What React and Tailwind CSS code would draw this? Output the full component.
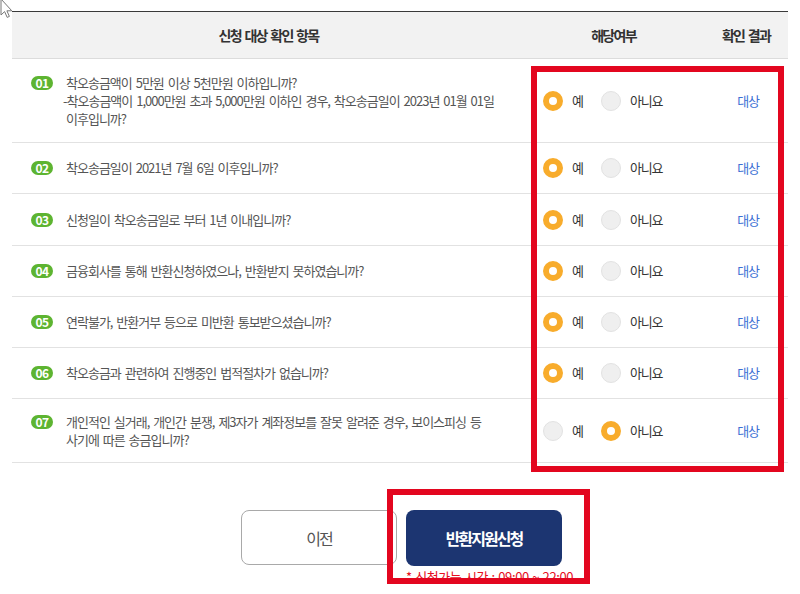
const rows = [
  {
    no: '01',
    lines: [
      '착오송금액이 5만원 이상 5천만원 이하입니까?',
      '-착오송금액이 1,000만원 초과 5,000만원 이하인 경우, 착오송금일이 2023년 01월 01일',
      '이후입니까?',
    ],
    h: 'h-[84px]',
    yes: true,
  },
  { no: '02', lines: ['착오송금일이 2021년 7월 6일 이후입니까?'], h: 'h-[51px]', yes: true },
  { no: '03', lines: ['신청일이 착오송금일로 부터 1년 이내입니까?'], h: 'h-[52px]', yes: true },
  { no: '04', lines: ['금융회사를 통해 반환신청하였으나, 반환받지 못하였습니까?'], h: 'h-[51px]', yes: true },
  { no: '05', lines: ['연락불가, 반환거부 등으로 미반환 통보받으셨습니까?'], h: 'h-[51px]', yes: true, noLabel: '아니오' },
  { no: '06', lines: ['착오송금과 관련하여 진행중인 법적절차가 없습니까?'], h: 'h-[51px]', yes: true },
  {
    no: '07',
    lines: ['개인적인 실거래, 개인간 분쟁, 제3자가 계좌정보를 잘못 알려준 경우, 보이스피싱 등', '사기에 따른 송금입니까?'],
    h: 'h-[64px]',
    yes: false,
  },
];

function Radio({ checked }) {
  return checked ? (
    <span className="w-[20px] h-[20px] rounded-full border-[6px] border-[#f8ac2c] bg-white shrink-0" />
  ) : (
    <span className="w-[20px] h-[20px] rounded-full border border-[#e2e2e2] bg-[#efefef] shrink-0" />
  );
}

export default function App() {
  return (
    <div className="relative w-[800px] h-[594px] bg-white overflow-hidden font-['Noto_Sans_CJK_KR','Noto_Sans',sans-serif]">
      {/* cursor */}
      <svg className="absolute left-0 top-0" width="14" height="20" viewBox="0 0 14 20">
        <path d="M1 -1 L1 15 L4.6 11.6 L7.2 17.4 L9.4 16.4 L6.9 10.8 L11.8 10.8 Z" fill="#fff" stroke="#777" strokeWidth="1" />
      </svg>

      <div className="pt-[11px] px-[12px]">
        <div className="border-t border-[#3a3a3a]">
          {/* header */}
          <div className="grid grid-cols-[519px_169px_92px] h-[47px] items-center bg-[#f2f2f2] border-b border-[#dcdcdc] text-[14px] font-bold text-[#333] tracking-[-1.7px] [word-spacing:2px]">
            <div className="text-center pr-[6px]">신청 대상 확인 항목</div>
            <div className="text-center pr-[4px]">해당여부</div>
            <div className="text-center">확인 결과</div>
          </div>

          {rows.map((r) => (
            <div
              key={r.no}
              className={`grid grid-cols-[519px_169px_92px] items-center border-b border-[#e2e2e2] ${r.h}`}
            >
              <div className="flex items-start pl-[19px]">
                <span className="mt-[2px] w-[22px] h-[14px] rounded-full bg-[#5db431] text-white text-[12px] font-bold leading-[14px] text-center tracking-[-0.6px] shrink-0">
                  {r.no}
                </span>
                <div className="ml-[13px] text-[13px] leading-[18px] text-[#555] tracking-[-1px] [word-spacing:2px]">
                  {r.lines.map((l, i) => (
                    <div key={i} className={l.startsWith('-') ? '-ml-[3px]' : ''}>
                      {l}
                    </div>
                  ))}
                </div>
              </div>
              <div className="flex items-center pl-[12px] text-[13px] text-[#333] tracking-[-1.2px]">
                <div className="flex items-center gap-[9px] w-[58px]">
                  <Radio checked={r.yes} />
                  <span>예</span>
                </div>
                <div className="flex items-center gap-[9px]">
                  <Radio checked={!r.yes} />
                  <span>{r.noLabel || '아니요'}</span>
                </div>
              </div>
              <div className="text-center text-[13px] text-[#3b6fd4] tracking-[-1.3px] pl-[4px]">대상</div>
            </div>
          ))}
        </div>
      </div>

      {/* buttons */}
      <div className="flex justify-center gap-[9px] mt-[47px] pl-[3px]">
        <button className="w-[156px] h-[55px] rounded-[8px] border border-[#a9a9a9] bg-white text-[16px] text-[#555] tracking-[-2px]">
          이전
        </button>
        <div className="w-[156px] flex flex-col">
          <button className="w-[156px] h-[56px] rounded-[8px] bg-[#1c3571] text-white text-[16px] font-bold tracking-[-2px]">
            반환지원신청
          </button>
          <p className="mt-[2px] whitespace-nowrap text-[13px] leading-[18px] text-[#e60f1e] tracking-[-0.4px] [word-spacing:1px]">
            * 신청가능 시간 : 09:00 ~ 22:00
          </p>
        </div>
      </div>

      {/* annotation boxes */}
      <div className="absolute left-[531px] top-[66px] w-[253px] h-[406px] border-[6px] border-[#e3061f]" />
      <div className="absolute left-[387px] top-[489px] w-[203px] h-[95px] border-[6px] border-[#e3061f]" />
    </div>
  );
}
